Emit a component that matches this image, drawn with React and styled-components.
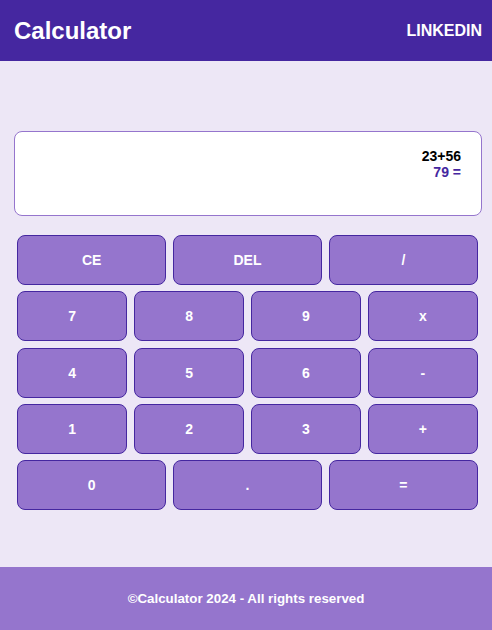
import React from "react";
import styled, { createGlobalStyle } from "styled-components";

const Global = createGlobalStyle`
  html, body { margin: 0; padding: 0; }
  body {
    font-family: "Liberation Sans", Arial, sans-serif;
    background: #ede7f6;
  }
  * { box-sizing: border-box; }
`;

const Page = styled.div`
  display: flex;
  flex-direction: column;
  min-height: 630px;
`;

const Header = styled.header`
  height: 61px;
  background: #4527a0;
  color: #fff;
  display: flex;
  align-items: center;
  justify-content: space-between;
  padding: 0 10px 0 14px;
`;

const Title = styled.h1`
  margin: 0;
  font-size: 24px;
  font-weight: 700;
`;

const NavLink = styled.a`
  color: #fff;
  font-size: 16px;
  font-weight: 700;
  text-decoration: none;
`;

const Main = styled.main`
  flex: 1;
  padding: 70px 10px 0 14px;
`;

const Display = styled.div`
  height: 85px;
  background: #fff;
  border: 1px solid #9575cd;
  border-radius: 8px;
  padding: 16px 20px 0 20px;
  display: flex;
  flex-direction: column;
  align-items: flex-end;
  font-size: 14px;
  font-weight: 700;
  line-height: 16px;
`;

const Line = styled.div`
  color: ${(p) => p.$color || "#000"};
`;

const Keypad = styled.div`
  margin: 19px 4px 0 3px;
  display: flex;
  flex-direction: column;
  gap: 6.3px;
`;

const Row = styled.div`
  display: grid;
  grid-template-columns: repeat(${(p) => p.$cols}, 1fr);
  gap: 6.5px;
`;

const Key = styled.button`
  height: 50px;
  background: #9575cd;
  border: 1px solid #4527a0;
  border-radius: 8px;
  color: #fff;
  font-family: "Liberation Sans", Arial, sans-serif;
  font-size: 14px;
  font-weight: 700;
  cursor: pointer;
  padding: 0;
`;

const Footer = styled.footer`
  height: 63px;
  background: #9575cd;
  color: #fff;
  display: flex;
  align-items: center;
  justify-content: center;
  font-size: 13.33px;
  font-weight: 700;
`;

const rows = [
  ["CE", "DEL", "/"],
  ["7", "8", "9", "x"],
  ["4", "5", "6", "-"],
  ["1", "2", "3", "+"],
  ["0", ".", "="],
];

export default function App() {
  return (
    <>
      <Global />
      <Page>
        <Header>
          <Title>Calculator</Title>
          <NavLink href="#">LINKEDIN</NavLink>
        </Header>
        <Main>
          <Display>
            <Line>23+56</Line>
            <Line $color="#4527a0">79 =</Line>
          </Display>
          <Keypad>
            {rows.map((r, i) => (
              <Row key={i} $cols={r.length}>
                {r.map((k) => (
                  <Key key={k}>{k}</Key>
                ))}
              </Row>
            ))}
          </Keypad>
        </Main>
        <Footer>©Calculator 2024 - All rights reserved</Footer>
      </Page>
    </>
  );
}
